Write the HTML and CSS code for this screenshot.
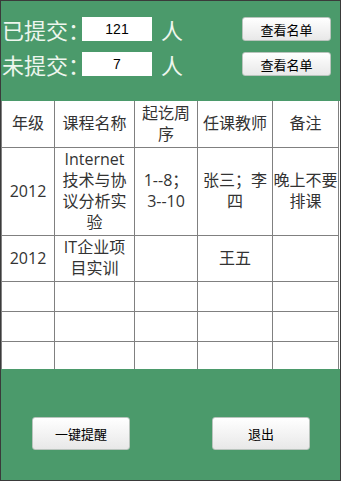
FILE: index.html
```html
<!DOCTYPE html>
<html lang="zh-CN">
<head>
<meta charset="utf-8">
<title>提交情况</title>
<link rel="stylesheet" href="styles.css">
</head>
<body>
<div class="page">
  <div class="top">
    <div class="stat-row">
      <span class="stat-label">已提交：</span>
      <input class="stat-value" type="text" value="121" readonly>
      <span class="stat-unit">人</span>
      <button class="list-btn" type="button">查看名单</button>
    </div>
    <div class="stat-row">
      <span class="stat-label">未提交：</span>
      <input class="stat-value" type="text" value="7" readonly>
      <span class="stat-unit">人</span>
      <button class="list-btn" type="button">查看名单</button>
    </div>
  </div>
  <table class="grid">
    <colgroup>
      <col class="c1"><col class="c2"><col class="c3"><col class="c4"><col class="c5">
    </colgroup>
    <tr class="r-head"><td>年级</td><td>课程名称</td><td>起讫周序</td><td>任课教师</td><td>备注</td></tr>
    <tr class="r-1"><td>2012</td><td>Internet技术与协议分析实验</td><td>1--8；3--10</td><td>张三；李四</td><td>晚上不要排课</td></tr>
    <tr class="r-2"><td>2012</td><td>IT企业项目实训</td><td></td><td>王五</td><td></td></tr>
    <tr class="r-e"><td></td><td></td><td></td><td></td><td></td></tr>
    <tr class="r-e"><td></td><td></td><td></td><td></td><td></td></tr>
    <tr class="r-last"><td></td><td></td><td></td><td></td><td></td></tr>
  </table>
  <div class="bottom">
    <button class="act-btn" type="button">一键提醒</button>
    <button class="act-btn" type="button">退出</button>
  </div>
</div>
</body>
</html>
```
FILE: styles.css
```css
html, body {
  margin: 0;
  padding: 0;
  background: #ffffff;
}
.page {
  width: 341px;
  height: 481px;
  box-sizing: border-box;
  border: 1px solid #3a3a3a;
  background: #ffffff;
  display: flex;
  flex-direction: column;
  font-family: "Noto Sans CJK SC", "Liberation Sans", sans-serif;
  overflow: hidden;
}
.top {
  height: 100px;
  flex-shrink: 0;
  background: #4b9a6b;
  box-sizing: border-box;
  padding: 16px 9px 0 0;
  display: flex;
  flex-direction: column;
  gap: 11px;
}
.stat-row {
  display: flex;
  align-items: center;
  height: 24px;
}
.stat-label {
  width: 80px;
  flex-shrink: 0;
  white-space: nowrap;
  font-size: 22px;
  line-height: 24px;
  color: #eef6ee;
  padding-left: 1px;
}
.stat-value {
  width: 70px;
  height: 24px;
  box-sizing: border-box;
  border: none;
  margin: 0;
  padding: 0;
  background: #ffffff;
  text-align: center;
  font-family: "Liberation Sans", sans-serif;
  font-size: 14px;
  color: #000000;
  flex-shrink: 0;
}
.stat-unit {
  margin-left: 9px;
  font-size: 22px;
  line-height: 24px;
  color: #eef6ee;
}
.list-btn {
  margin-left: auto;
  width: 89px;
  height: 24px;
  box-sizing: border-box;
  border: 1px solid #b9c4bd;
  border-radius: 3px;
  background: linear-gradient(#ffffff, #e8e8e8);
  font-family: "Noto Sans CJK SC", sans-serif;
  font-size: 13px;
  color: #000000;
  padding: 0;
}
.grid {
  width: 337px;
  table-layout: fixed;
  border-collapse: collapse;
  flex-shrink: 0;
  font-family: "Open Sans", "Noto Sans CJK SC", sans-serif;
  font-size: 16px;
  line-height: 21px;
  color: #333333;
}
.grid td {
  border: 1px solid #808080;
  padding: 0;
  text-align: center;
  vertical-align: middle;
}
.grid td:nth-child(2) { padding: 0 7px; }
.grid td:nth-child(3) { padding: 0 5px; }
.grid td:nth-child(4) { padding: 0 4px; }
.grid tr:first-child td {
  border-top: none;
}
.grid tr.r-last td {
  border-bottom: none;
}
.c1 { width: 53px; }
.c2 { width: 80px; }
.c3 { width: 63px; }
.c4 { width: 75px; }
.c5 { width: 66px; }
.r-head { height: 46px; }
.r-1 { height: 88px; }
.r-2 { height: 46px; }
.r-e { height: 30px; }
.r-last { height: 28px; }
.bottom {
  flex: 1;
  background: #4b9a6b;
  display: flex;
  align-items: flex-start;
  padding: 48px 0 0 31px;
  gap: 82px;
}
.act-btn {
  width: 98px;
  height: 33px;
  box-sizing: border-box;
  border: 1px solid #b9c4bd;
  border-radius: 3px;
  background: linear-gradient(#ffffff, #e8e8e8);
  font-family: "Noto Sans CJK SC", sans-serif;
  font-size: 13px;
  color: #000000;
  padding: 0;
}
```
